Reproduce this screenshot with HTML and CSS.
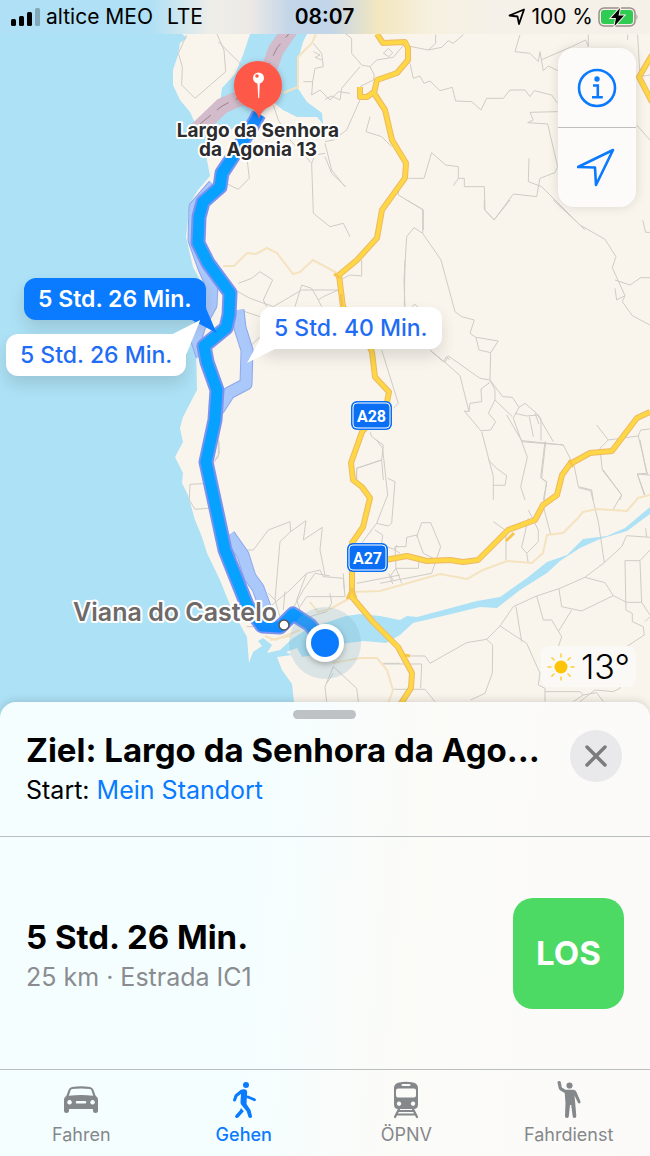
FILE: index.html
```
<!DOCTYPE html>
<html lang="de">
<head>
    <meta charset="UTF-8">
    <meta name="viewport" content="width=device-width, initial-scale=1.0">
    <title>Karten</title>
    <link rel="stylesheet" href="styles.css">
</head>
<body>
    <header class="status-bar">
        <div class="status-left">
            <svg class="signal" width="30" height="18" viewBox="0 0 30 18">
                <rect x="0" y="11" width="5" height="7" rx="1.5"/>
                <rect x="8" y="8" width="5" height="10" rx="1.5"/>
                <rect x="16" y="4" width="5" height="14" rx="1.5"/>
                <rect x="24" y="0" width="5" height="18" rx="1.5" opacity="0.25"/>
            </svg>
            <span class="carrier">altice MEO</span>
            <span>LTE</span>
        </div>
        <span class="clock">08:07</span>
        <div class="status-right">
            <svg width="18" height="18" viewBox="0 0 18 18">
                <path d="M1.500 7.500 L16 1.500 L11 16 L9.500 8.500 Z" fill="none" stroke="#000" stroke-width="1.800" stroke-linejoin="round"/>
            </svg>
            <span>100 %</span>
            <svg width="40" height="22" viewBox="0 0 40 22">
                <rect x="1" y="2" width="36" height="18" rx="5" fill="none" stroke="#9c8d8c" stroke-width="1.500"/>
                <rect x="3" y="4" width="32" height="14" rx="3" fill="#2fcb53"/>
                <path d="M38.500 8 q2 3 0 6 z" fill="#9c8d8c"/>
                <path d="M22 2 L13 12 H18 L16.500 20 L26 9.500 H20.500 Z" stroke="#f4f1e8" stroke-width="2" paint-order="stroke"/>
            </svg>
        </div>
    </header>

    <main class="map">
        <svg class="map-canvas" viewBox="0 34 650 684" preserveAspectRatio="xMinYMin slice">
            <defs>
                <linearGradient id="routeFill" gradientUnits="userSpaceOnUse" x1="0" y1="110" x2="0" y2="640">
                    <stop offset="0" stop-color="#1683ff"/>
                    <stop offset="0.12" stop-color="#07a1ff"/>
                    <stop offset="0.93" stop-color="#07a1ff"/>
                    <stop offset="1" stop-color="#1480ff"/>
                </linearGradient>
                <filter id="softShadow" x="-50%" y="-50%" width="200%" height="200%">
                    <feDropShadow dx="0" dy="2" stdDeviation="3" flood-color="#000" flood-opacity="0.3"/>
                </filter>
            </defs>

            <!-- sea, lagoon and river -->
            <path class="water" d="M0 34 H182 L187 38 L180 43 L178 55 L173 70 L173 85 L180 100 L190 112 L195 123 L220 102 L222 88 L235 74 L243 55 L250 34 H307 L303 42 L298 60 L297 87 L307 102 L322 113 L323 124 L317 117 L297 117 L283 110 L273 102 L258 117 L235 127 L205 146 L207 160 L210 176 L198 190 L190 203 L186 237 L193 267 L200 280 L207 310 L196 345 L197 390 L183 417 L180 428 L183 442 L175 457 L183 473 L182 483 L188 495 L195 520 L202 537 L207 553 L220 580 L232 610 L247 637 L249 663 L253 652 L262 646 L258 641 L263 638 L272 645 L267 653 L280 650 L292 639 L307 629 L346 616 L360 614 L380 616 L400 620 L407 616 L417 617 L447 609 L477 601 L500 597 L527 578 L547 562 L567 555 L583 539 L607 536 L625 528 L650 507 V514 L627 531 L600 539 L580 548 L560 561 L547 573 L520 590 L497 608 L480 607 L447 615 L413 623 L400 635 L386 643 L364 641 L340 644 L325 653 L302 657 L297 648 L286 652 L292 655 L277 657 L282 670 L292 684 L294 702 V718 H0 Z"/>

            <g class="lanes">
                <g transform="translate(325 0) scale(0.3333)">
                    <path d="M60 100 L80 115 V160 L110 195 L135 200 L148 225 L145 240 L105 260 M135 200 L155 180 L205 172 L240 130 M0 298 L20 288 L45 300 L50 265 L105 200 M175 160 L190 145 L203 158 L192 170 Z"/>
                    <path d="M250 138 L310 150 L350 142 L370 122 L385 130 L415 104 M332 104 V130 L310 150"/>
                    <path d="M255 190 L265 235 L285 228 L297 250 L315 243 L345 272 L382 262 L392 303 L440 305 L468 330 L485 295 H535 L555 270 H600 L615 290 L628 272 L680 285 L698 310"/>
                    <path d="M585 104 L570 155 L615 160 L640 185 L645 155 L655 212 L670 198 L698 212 M648 180 L740 140 L782 120 L790 140 V104 M908 104 V120 M938 104 L945 230 L975 225 M935 375 L975 420"/>
                    <path d="M698 335 L615 337 L625 360 L608 368 L668 372 L698 500 L690 518 L645 535 L635 590 L565 582 L507 660 L480 630 L478 560 H418 V535 H400 V500 L362 495 L320 458 L297 535 H250 M400 535 L385 557"/>
                    <path d="M612 475 L610 545 L650 560 L780 690 M105 300 L65 390 L25 420 L0 425 M135 350 L123 395 L170 410 L200 440 M0 470 L20 520 L62 560 M220 550 V585 L295 630 V690"/>
                </g>
                <g transform="translate(400 200) scale(0.3333)">
                    <path d="M15 320 L12 240 L20 110 L42 83 L68 100 L123 180 L165 335 L185 350 L223 360 L210 400 L228 412 L295 423 L272 458 L237 450 L228 412 M20 0 L68 28 V100"/>
                    <path d="M272 458 L270 540 L240 535 L145 468 L135 487 L93 453 M135 487 L180 527 L207 635 L193 633 L245 695 L280 830 V900 M270 547 L243 567 L245 605 L210 610 L207 635"/>
                    <path d="M270 540 L285 570 V600 L265 640 L287 665 L272 690 L245 692 M270 540 L308 590 L337 592 L357 622 L375 610 L410 640 L460 725 M285 600 L337 650 M320 645 L365 722 L490 735 L523 800 L535 860 L575 870 L580 900"/>
                    <path d="M357 622 L340 655 L382 772 L362 860 L375 900 M345 640 L380 648 L415 645 L423 658 V722 M388 650 L400 710 M405 640 L417 672 M435 725 L422 832 L440 848 L430 900 M265 780 L290 805 L320 827 L315 856 H280"/>
                    <path d="M590 675 L625 720 L715 708 L722 690 L750 687 M625 720 L600 745 L607 810 L665 885 L660 900 M715 708 L743 825 L712 822 L735 885 M743 825 H750"/>
                    <path d="M253 0 V28 L282 60 L330 0 M460 0 L540 75 L615 118 L648 170 L637 203 L675 287 L667 305 L697 347 L750 375 M728 60 L737 97 H750 M645 240 L690 255 L722 233 H750 M645 265 L650 300 L675 287"/>
                </g>
                <g transform="translate(380 440) scale(0.3333)">
                    <path d="M340 245 L378 272 V360 M445 210 L475 270 V305 L440 340 L425 322 L445 235 M440 340 L445 370 M497 5 L485 115 L500 125 L490 200 L512 283 M425 5 L550 15"/>
                    <path d="M595 143 L632 152 L655 245 L673 368 L725 320 L740 287 L810 292 M670 90 L725 165 L700 207 M780 0 L800 100 L772 102 L793 165 M797 265 L800 292"/>
                    <path d="M673 368 L615 412 L540 445 L470 468 L400 500 L360 558 L320 598 L260 608 L150 670 L135 648 H90 M360 558 L440 610 L480 700 L475 735 L495 745 V785 M408 500 L425 605"/>
                    <path d="M470 468 L490 540 H515 L545 590 L535 620 M537 447 L545 500 L605 513 L700 467 L675 428 L615 412 M535 575 L575 510 M700 467 L740 487 H785 L810 525"/>
                    <path d="M785 487 L780 362 H735 L738 510 L757 520 V545 L790 560 L793 585 L740 620 M780 362 L810 330 M795 545 L810 530 M320 598 L338 615 L337 700 L315 760 L272 780 M10 672 H125 L122 745 M40 748 H135 L165 785"/>
                    <path d="M110 290 L125 248 H152 L182 320 L155 400 L0 430 M45 320 H78 L80 292 L110 285 L130 340 L160 355 M45 320 L48 385 H115 L118 350 M48 385 L65 430 M48 385 L30 410 L38 432 M0 325 L20 320 L48 330"/>
                    <path d="M495 755 H600 L610 765 L650 758 L670 785 M600 785 L645 750 L700 755 L720 745 L730 720 M580 785 L610 765"/>
                </g>
                <g transform="translate(160 440) scale(0.3333)">
                    <path d="M145 130 L90 133 L88 180 L105 208 L145 205 M175 0 V50 L160 70 M258 350 L262 330 H280 L325 270 L390 245 L392 275 L360 305 L345 480 M392 275 L438 242 L430 300 L487 262 L480 330 L495 405"/>
                    <path d="M650 0 L668 25 L683 165 L650 250 L605 310 M665 60 L590 85 V120 M683 115 L705 125 L695 250 L685 258 L650 250 M645 270 L668 285 L665 310"/>
                    <path d="M330 500 L390 450 L440 400 L480 390 L490 410 L550 415 L555 470 L440 470 L420 500 M375 455 L370 510 M390 520 L430 450 L465 400 L510 408 M325 460 L345 480 L360 530 M510 460 L515 490 L500 515 L450 530 M440 400 L410 480 L420 510"/>
                    <path d="M550 400 L553 450 M590 430 L720 405 M710 315 L705 330 L720 340 M685 400 L700 420 M520 680 L495 740 L500 785 M520 680 L590 745 L595 785 M500 730 L520 700 M670 670 H720 M260 560 H290"/>
                </g>
                <g transform="translate(180 260) scale(0.3333)">
                    <path d="M165 90 L210 115 L280 140 L365 90 H475 L430 110 L415 120 L425 140 M175 70 L215 55 L240 35 L278 60 L250 120 L260 140 M345 140 L365 75 L395 85 L415 120 M180 150 L240 170 M210 260 L240 230"/>
                    <path d="M675 0 L673 140 M605 270 L655 430 L640 445 M570 515 L575 530 L610 555 L605 600 L610 660 M605 600 L530 625 V660 M545 0 V48 L510 45 L480 60 M695 140 L705 133 L715 142 M750 270 L790 305 L800 290 L810 300 M117 545 L118 580 L105 600"/>
                </g>
                <g transform="translate(150 30) scale(0.3333)">
                    <path d="M200 10 L222 60 L227 125 L135 205 L95 165 L97 110 L85 70 L110 15 M205 35 L280 110 M370 225 L385 270 L420 330 L485 400 L490 550 L540 590 L580 580 L600 620 M485 400 L495 375 L525 370"/>
                    <path d="M525 340 L545 420 L585 470 M290 375 L298 445 L265 478 L232 462 M490 40 L515 70 L520 110 L495 115 L488 155 H460 M490 65 L510 75 L495 82 L515 90 M488 155 L485 195 L510 180 L540 210 L565 185 L600 190"/>
                </g>
            </g>

            <g class="minor-roads">
                <path d="M223 266 H234 L247 253 L256 254 L267 248 L277 253 L293 274 L300 272 L313 260 L337 273"/>
                <path d="M352 592 L380 591 L440 574 L467 579 L483 570 L507 561 L532 563 L543 553 L547 535 L563 533 L578 518 L583 512 L597 509 L627 511 L638 498 L650 495"/>
                <path d="M333 663 L360 658 L377 658 L387 670 L393 690 L388 704 M283 93 L298 87 V57 L312 43 L316 34"/>
                <path d="M265 636 L275 640 L300 630 M310 602 L318 612 L330 609 L352 597 M270 640 L290 636"/>
            </g>

            <!-- estuary motorway -->
            <path class="motorway" d="M197 130 L222 106 L238 99 L262 93 L268 72 L276 50 L290 30"/>
            <path class="motorway-line" d="M200 124 L222 106 L236 99 L262 93 L268 66 L277 48 L292 30"/>

            <g id="highways">
                <path class="road-edge" d="M377 34 L383 43 L405 42 L408 48 L408 60 L397 73 L377 80 L374 93 L385 110 L392 140 L406 163 L405 178 L382 210 L377 238 L357 260 L339 275 L343 307 L362 330 L372 352 L375 377 L389 392 L387 402 L362 432 L351 463 L353 480 L362 487 L370 498 L363 527 L352 543 V587 L352 597 L373 622 L398 647 L412 673 L411 688 L400 705 M374 92 L367 97 H360 V87 M385 560 L407 556 L427 561 L450 560 L463 562 L478 560 L508 530 L535 520 L543 505 L557 495 L562 475 L570 464 L590 453 L612 451 L637 418 L650 412 M652 55 L639 77 L652 102"/>
                <path class="road" d="M377 34 L383 43 L405 42 L408 48 L408 60 L397 73 L377 80 L374 93 L385 110 L392 140 L406 163 L405 178 L382 210 L377 238 L357 260 L339 275 L343 307 L362 330 L372 352 L375 377 L389 392 L387 402 L362 432 L351 463 L353 480 L362 487 L370 498 L363 527 L352 543 V587 L352 597 L373 622 L398 647 L412 673 L411 688 L400 705 M374 92 L367 97 H360 V87 M385 560 L407 556 L427 561 L450 560 L463 562 L478 560 L508 530 L535 520 L543 505 L557 495 L562 475 L570 464 L590 453 L612 451 L637 418 L650 412 M652 55 L639 77 L652 102"/>
                <path class="ramp" d="M352 588 L347 599 M352 588 L356 598 M506 541 L514 533 M334 274 L340 278 M341 294 L342 306 M404 655 L410 656 M569 460 L573 467"/>
            </g>

            <!-- alternative routes, then the chosen one -->
            <g class="alt-edge">
                <path d="M214 185 L195 207 L194 240 L204 268 L212 286 L211 305 L200 325 L196 338 L202 356"/>
                <path d="M238 310 L240 328 L247 350 L246 384 L229 393 L218 410"/>
                <path d="M229 535 L243 555 L250 577 L258 588 L266 610"/>
            </g>
            <g class="alt-fill">
                <path d="M214 185 L195 207 L194 240 L204 268 L212 286 L211 305 L200 325 L196 338 L202 356"/>
                <path d="M238 310 L240 328 L247 350 L246 384 L229 393 L218 410"/>
                <path d="M229 535 L243 555 L250 577 L258 588 L266 610"/>
            </g>
            <path class="route-edge" d="M259 114 L250 130 L232 158 L222 173 L220 187 L203 202 L199 217 L198 243 L208 263 L230 293 L229 315 L226 328 L204 346 L207 362 L217 390 L215 420 L206 462 L225 550 L247 605 L262 626 L280 627 L293 614 L310 625 L322 640"/>
            <path class="route" d="M259 114 L250 130 L232 158 L222 173 L220 187 L203 202 L199 217 L198 243 L208 263 L230 293 L229 315 L226 328 L204 346 L207 362 L217 390 L215 420 L206 462 L225 550 L247 605 L262 626 L280 627 L293 614 L310 625 L322 640"/>

            <!-- destination pin -->
            <path d="M258 61 a24 24 0 0 1 24 24 c0 14 -8 20 -15 23 c-4 2 -7 6 -8 11 c-1 -5 -4 -9 -9 -11 c-8 -3 -16 -9 -16 -23 a24 24 0 0 1 24 -24 z" fill="#fe5848" filter="url(#softShadow)"/>
            <circle cx="258.500" cy="78" r="5.500" fill="#fff"/>
            <circle cx="257" cy="76" r="1.800" fill="#fe5848"/>
            <path d="M257.400 82 H259.800 L259.200 98 H258.200 Z" fill="#fff"/>

            <!-- current location -->
            <circle cx="325" cy="643" r="36" fill="#7faec9" opacity="0.24"/>
            <circle cx="325" cy="643" r="19" fill="#fff" filter="url(#softShadow)"/>
            <circle cx="325" cy="643" r="14" fill="#0a7aff"/>

            <g class="shields">
                <rect x="351" y="401" width="41" height="29" rx="6"/>
                <rect class="shield-line" x="353" y="403" width="37" height="25" rx="4"/>
                <text x="371.500" y="422">A28</text>
                <rect x="347" y="543" width="41" height="29" rx="6"/>
                <rect class="shield-line" x="349" y="545" width="37" height="25" rx="4"/>
                <text x="367.500" y="564">A27</text>
            </g>

            <text class="place-label" x="258" y="137">Largo da Senhora</text>
            <text class="place-label" x="258" y="156">da Agonia 13</text>
            <text class="city-label" x="175" y="621">Viana do Castelo</text>
            <circle cx="284" cy="625" r="5" fill="#fff" stroke="#555" stroke-width="1.500"/>
        </svg>

        <button class="bubble bubble-main">5 Std. 26 Min.</button>
        <button class="bubble bubble-left">5 Std. 26 Min.</button>
        <button class="bubble bubble-right">5 Std. 40 Min.</button>

        <div class="map-controls">
            <button aria-label="Info">
                <svg width="40" height="40" viewBox="0 0 40 40" fill="none" stroke="#0a7aff">
                    <circle cx="20" cy="20" r="18" stroke-width="2.600"/>
                    <circle cx="20" cy="11" r="2.700" fill="#0a7aff" stroke="none"/>
                    <path d="M16 17.500 H20.800 V29 M15 29.300 H25.800" stroke-width="2.600"/>
                </svg>
            </button>
            <button aria-label="Standort">
                <svg width="40" height="40" viewBox="0 0 40 40" fill="none" stroke="#0a7aff" stroke-width="2.600" stroke-linejoin="round">
                    <path d="M1 19 L36 2 L19 37 L18 19.500 Z"/>
                </svg>
            </button>
        </div>

        <div class="weather">
            <svg width="28" height="28" viewBox="0 0 28 28">
                <circle cx="14" cy="14" r="6.500" fill="#fdc40a"/>
                <path d="M14 1 V4 M14 24 V27 M1 14 H4 M24 14 H27 M4.800 4.800 L7 7 M21 21 L23.200 23.200 M4.800 23.200 L7 21 M21 7 L23.200 4.800" stroke="#fdcf3b" stroke-width="1.500" stroke-linecap="round"/>
            </svg>
            <span>13°</span>
        </div>
    </main>

    <section class="sheet">
        <div class="sheet-header">
            <div class="handle"></div>
            <div class="trip">
                <div class="trip-text">
                    <h1>Ziel: Largo da Senhora da Ago…</h1>
                    <p>Start: <a href="#">Mein Standort</a></p>
                </div>
                <button class="close" aria-label="Schließen">
                    <svg width="24" height="24" viewBox="0 0 24 24">
                        <path d="M3 3 L21 21 M21 3 L3 21" stroke="#7c7c7f" stroke-width="3.500" stroke-linecap="round"/>
                    </svg>
                </button>
            </div>
        </div>

        <div class="route-row">
            <div class="route-text">
                <h2>5 Std. 26 Min.</h2>
                <p>25 km · Estrada IC1</p>
            </div>
            <button class="go">LOS</button>
        </div>

        <nav class="tabs">
            <button class="tab">
                <svg width="36" height="38" viewBox="0 0 36 38" fill="currentColor">
                    <path fill-rule="evenodd" d="M9 6 Q18 4.500 27 6 Q29.500 6.500 30.500 9 L32.500 14.500 Q35 16.500 35 19 V29.500 Q35 32 32.500 32 Q30 32 30 29.500 V28 H6 V29.500 Q6 32 3.500 32 Q1 32 1 29.500 V19 Q1 16.500 3.500 14.500 L5.500 9 Q6.500 6.500 9 6 Z M9 8 Q8 8.200 7.500 9.500 L5.800 14.700 Q18 13.500 30.200 14.700 L28.500 9.500 Q28 8.200 27 8 Q18 6.800 9 8 Z M6.500 19 a2.300 2.300 0 1 0 0.100 0 Z M29.500 19 a2.300 2.300 0 1 0 0.100 0 Z M14 20 Q12.700 20 12.700 21.300 Q12.700 22.500 14 22.500 H22 Q23.300 22.500 23.300 21.300 Q23.300 20 22 20 Z"/>
                </svg>
                <span>Fahren</span>
            </button>
            <button class="tab active">
                <svg width="36" height="38" viewBox="0 0 36 38" fill="currentColor">
                    <circle cx="20" cy="4" r="3"/>
                    <path d="M14.500 9 Q17 7.700 19.500 8.500 Q21.200 9 21.200 11 L20.500 23 L24.500 29 L26 35 Q26.200 37 24.300 37 Q22.800 37 22.300 35.500 L20.800 30.500 L15.500 24 Q14.300 22.500 14.500 20.500 L15 13 L11.500 15.500 L10 19.500 Q9.300 20.900 8 20.400 Q6.700 19.900 7.100 18.500 L8.800 13.800 Z"/>
                    <path d="M22 16 L28.500 18.700" stroke="currentColor" stroke-width="2.800" stroke-linecap="round"/>
                    <path d="M15 27 L17.800 30.300 L12.500 36.300 Q11.200 37.500 9.800 36.700 Q8.500 35.700 9.500 34.300 L13.800 29.500 Z"/>
                </svg>
                <span>Gehen</span>
            </button>
            <button class="tab">
                <svg width="36" height="38" viewBox="0 0 36 38" fill="currentColor">
                    <path fill-rule="evenodd" d="M11 1.500 Q18 0 25 1.500 Q30 2.500 30 7 V23.500 Q30 28 25.500 28 H10.500 Q6 28 6 23.500 V7 Q6 2.500 11 1.500 Z M14.500 3 Q13.500 3 13.500 4 Q13.500 5 14.500 5 H21.500 Q22.500 5 22.500 4 Q22.500 3 21.500 3 Z M10 7.500 Q8 7.500 8 9.500 V14.500 Q8 16.500 10 16.500 H26 Q28 16.500 28 14.500 V9.500 Q28 7.500 26 7.500 Z M11 20.500 a2.200 2.200 0 1 0 0.100 0 Z M25 20.500 a2.200 2.200 0 1 0 0.100 0 Z"/>
                    <path d="M11 28 L7 36 M25 28 L29 36 M9 33.500 H27 M11 30 H25" fill="none" stroke="currentColor" stroke-width="2.200" stroke-linecap="round"/>
                </svg>
                <span>ÖPNV</span>
            </button>
            <button class="tab">
                <svg width="36" height="38" viewBox="0 0 36 38" fill="currentColor">
                    <circle cx="18.500" cy="4.500" r="3.100"/>
                    <path d="M7.300 0.300 Q9.300 -0.500 9.800 1.300 L10.800 6.500 L14.500 8.700 H22 Q24.500 8.700 25.500 11 L29.500 20.500 Q29.800 22.300 28.300 22.500 Q27.200 22.500 26.800 21.500 L23.500 14.500 L24.200 22 L25.300 35 Q25.300 37 23.500 37 Q21.900 37 21.700 35.500 L20.200 24 H19 L17.800 35.500 Q17.500 37 15.800 37 Q14 37 14 35 L14.500 22 L13.700 12 L9 9.200 Q8 8.500 7.700 7.300 L6.500 1.500 Q6.300 0.500 7.300 0.300 Z"/>
                </svg>
                <span>Fahrdienst</span>
            </button>
        </nav>
    </section>
</body>
</html>
```
FILE: styles.css
```
* {
    box-sizing: border-box;
}

body {
    display: flex;
    flex-direction: column;
    min-height: 100vh;
    margin: 0;
    background-color: #f9f5ed;
    color: #000;
    font-family: Inter, "Liberation Sans", sans-serif;
}

h1, h2, p {
    margin: 0;
}

button {
    padding: 0;
    border: none;
    background: none;
    color: inherit;
    font-family: inherit;
    cursor: pointer;
}

svg {
    display: block;
    flex-shrink: 0;
}

a {
    color: #0a7aff;
    text-decoration: none;
}

.status-bar {
    display: grid;
    grid-template-columns: 1fr auto 1fr;
    align-items: center;
    height: 34px;
    padding: 0 12px 0 11px;
    background: linear-gradient(90deg, #afe0f5 0, #afe0f5 150px, #eeeee9 210px, #ece9e5 250px, #c3d5e8 290px, #c3d5e8 330px, #f3e7bf 378px, #f6f0df 430px, #f5f1e9 500px);
    font-size: 21px;
    line-height: 24px;
}

.status-left,
.status-right {
    display: flex;
    align-items: center;
}

.signal {
    margin-right: 5px;
}

.carrier {
    margin-right: 14px;
}

.clock {
    font-weight: 600;
}

.status-right {
    justify-content: flex-end;
    gap: 5px;
}

.map {
    position: relative;
    flex: 1;
    min-height: 400px;
    margin-bottom: -16px;
    overflow: hidden;
}

.map-canvas {
    position: absolute;
    width: 100%;
    height: 100%;
}

.water {
    fill: #ade1f5;
}

.lanes {
    fill: none;
    stroke: #cfccc6;
    stroke-width: 3;
}

.minor-roads {
    fill: none;
    stroke: #f5e3c0;
    stroke-width: 2;
}

.motorway {
    fill: none;
    stroke: #d2bccb;
    stroke-width: 16;
}

.motorway-line {
    fill: none;
    stroke: #a08087;
    stroke-width: 1;
    stroke-dasharray: 14 8;
}

.road-edge {
    fill: none;
    stroke: #efb866;
    stroke-width: 6;
    stroke-linejoin: round;
}

.road {
    fill: none;
    stroke: #fdd744;
    stroke-width: 4;
    stroke-linejoin: round;
}

.ramp {
    fill: none;
    stroke: #f6c54c;
    stroke-width: 3;
}

.alt-edge,
.alt-fill,
.route-edge,
.route {
    fill: none;
    stroke-linejoin: round;
}

.alt-edge {
    stroke: #8fa7ec;
    stroke-width: 13;
}

.alt-fill {
    stroke: #abc8fb;
    stroke-width: 11;
}

.route-edge {
    stroke: #7b92ee;
    stroke-width: 15;
}

.route {
    stroke: url(#routeFill);
    stroke-width: 11;
}

.shields {
    fill: #0a6ff5;
}

.shields .shield-line {
    fill: none;
    stroke: #fff;
    stroke-width: 1;
}

.shields text {
    fill: #fff;
    font-family: Roboto, "Liberation Sans", sans-serif;
    font-size: 16px;
    font-weight: 700;
    text-anchor: middle;
}

.place-label,
.city-label {
    text-anchor: middle;
    paint-order: stroke;
    stroke: #fff;
    stroke-width: 4px;
    stroke-linejoin: round;
}

.place-label {
    fill: #2b2b2d;
    font-size: 19px;
    font-weight: 700;
}

.city-label {
    fill: #6d6a69;
    font-size: 25px;
    font-weight: 600;
}

.bubble {
    position: absolute;
    height: 42px;
    padding: 0 14px;
    border-radius: 12px;
    background-color: #fff;
    box-shadow: 0 8px 16px rgba(0, 0, 0, 0.12);
    color: #1f6cf5;
    font-size: 23px;
    font-weight: 500;
    white-space: nowrap;
}

.bubble::after {
    content: "";
    position: absolute;
    width: 30px;
    height: 34px;
    background-color: inherit;
}

.bubble-main {
    top: 244px;
    left: 24px;
    background-color: #0a7aff;
    color: #fff;
    font-weight: 600;
}

.bubble-main::after {
    right: -11px;
    bottom: -13px;
    clip-path: polygon(60% 0, 66% 30%, 100% 100%, 10% 58%);
}

.bubble-left {
    top: 300px;
    left: 6px;
}

.bubble-left::after {
    top: -14px;
    right: -14px;
    clip-path: polygon(100% 0, 54% 100%, 0 45%);
}

.bubble-right {
    top: 273px;
    left: 260px;
}

.bubble-right::after {
    bottom: -14px;
    left: -13px;
    clip-path: polygon(43% 0, 43% 30%, 0 100%, 100% 56%);
}

.map-controls {
    position: absolute;
    top: 14px;
    right: 14px;
    display: flex;
    flex-direction: column;
    width: 78px;
    border-radius: 16px;
    background-color: #fcfbf9;
    box-shadow: 0 0 12px rgba(0, 0, 0, 0.12);
}

.map-controls button {
    display: flex;
    align-items: center;
    justify-content: center;
    height: 79px;
}

.map-controls button + button {
    height: 80px;
    border-top: 1px solid #c0bfbe;
}

.weather {
    position: absolute;
    right: 14px;
    bottom: 31px;
    display: flex;
    align-items: center;
    gap: 6px;
    height: 41px;
    padding: 0 6px;
    border-radius: 8px;
    background-color: #fbf9f5;
    font-size: 34px;
    font-weight: 300;
}

.sheet {
    position: relative;
    border-radius: 16px 16px 0 0;
    background: linear-gradient(95deg, #f4feff 0%, #f5feff 40%, #fbfbf8 62%, #fbfaf9 100%);
    box-shadow: 0 -1px 8px rgba(0, 0, 0, 0.15);
}

.sheet-header {
    height: 135px;
    padding: 8px 28px 0 26px;
    border-bottom: 1px solid #b9bfc0;
}

.handle {
    width: 63px;
    height: 9px;
    margin: 0 auto;
    border-radius: 5px;
    background-color: #bfc2c4;
}

.trip {
    display: flex;
    align-items: center;
    justify-content: space-between;
    margin-top: 11px;
}

.trip-text {
    min-width: 0;
}

.trip h1 {
    overflow: hidden;
    font-size: 33px;
    font-weight: 700;
    line-height: 40px;
    text-overflow: ellipsis;
    white-space: nowrap;
}

.trip p {
    font-size: 25px;
    line-height: 40px;
}

.close {
    display: flex;
    flex-shrink: 0;
    align-items: center;
    justify-content: center;
    align-self: flex-start;
    width: 52px;
    height: 52px;
    border-radius: 50%;
    background-color: #e9e9eb;
}

.route-row {
    display: flex;
    align-items: center;
    justify-content: space-between;
    height: 232px;
    padding: 0 26px;
}

.route-text {
    padding-top: 8px;
}

.route-row h2 {
    font-size: 33px;
    font-weight: 700;
    line-height: 40px;
}

.route-row p {
    color: #8a8c8f;
    font-size: 25px;
    line-height: 40px;
}

.go {
    width: 111px;
    height: 111px;
    border-radius: 20px;
    background-color: #4cd964;
    color: #fff;
    font-size: 33px;
    font-weight: 700;
}

.tabs {
    display: grid;
    grid-template-columns: repeat(4, 1fr);
    height: 87px;
    border-top: 1px solid #b9bfc0;
}

.tab {
    display: flex;
    flex-direction: column;
    align-items: center;
    gap: 5px;
    padding-top: 11px;
    color: #85888b;
    font-size: 18px;
    line-height: 22px;
}

.tab.active {
    color: #0a7aff;
    font-weight: 500;
}
```
